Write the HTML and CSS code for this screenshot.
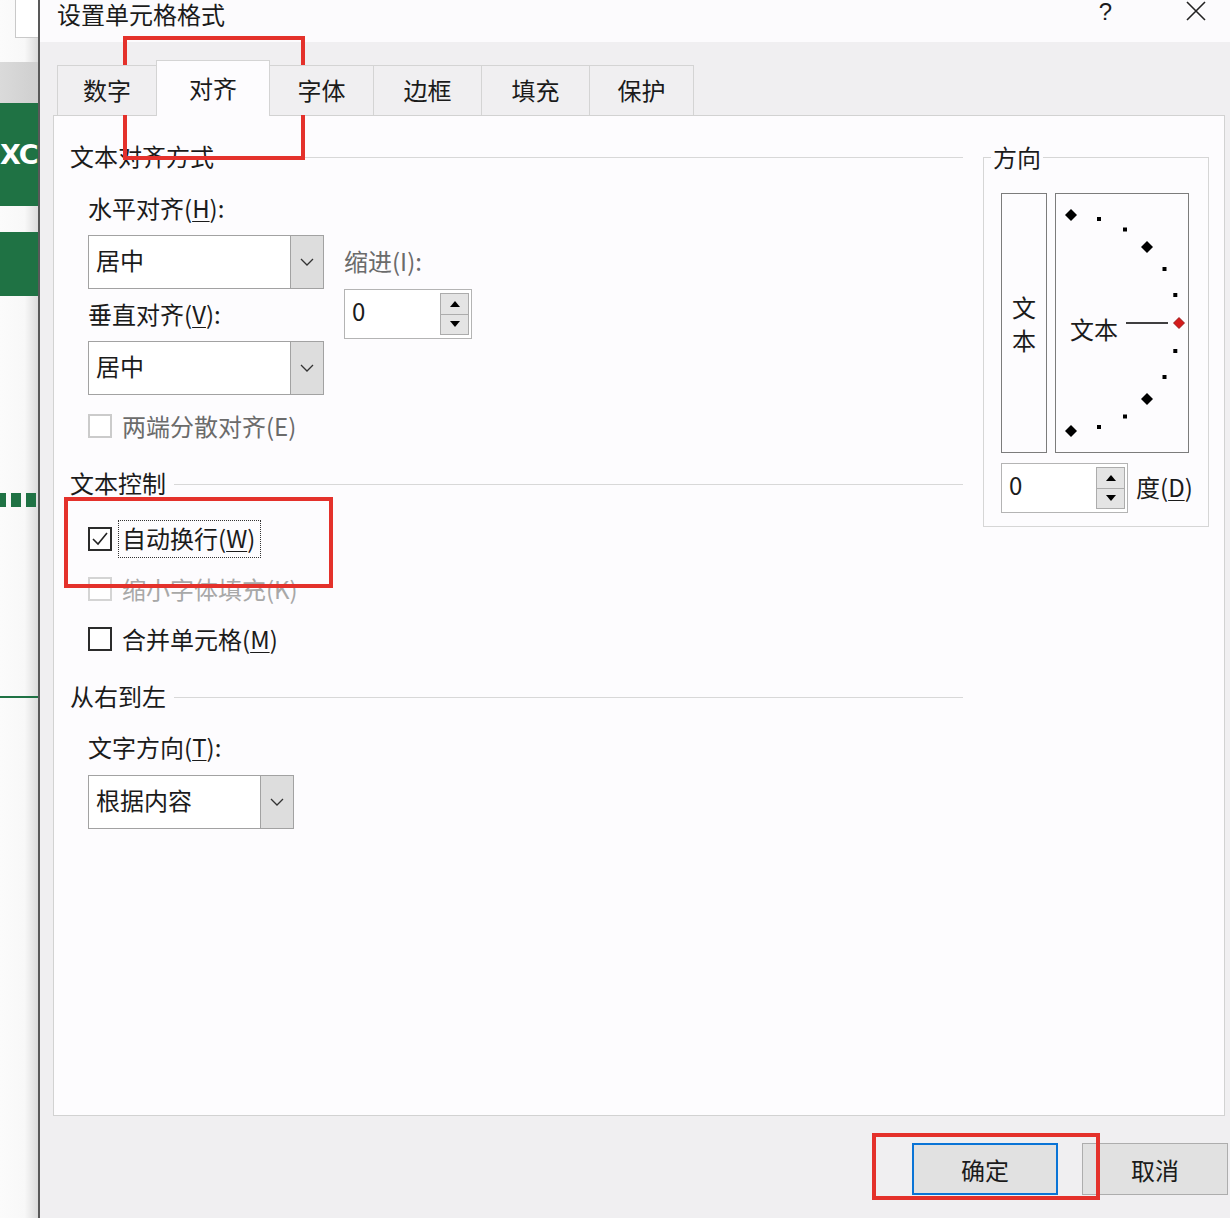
FILE: index.html
```html
<!DOCTYPE html>
<html lang="zh-CN">

<head>
  <meta charset="UTF-8">
  <title>设置单元格格式</title>
  <link rel="stylesheet" href="styles.css">
</head>

<body>

  <!-- excel sheet peeking out behind the dialog -->
  <div class="sheet-edge">
    <div class="edge-top"><div class="edge-box"></div></div>
    <div class="edge-gray"></div>
    <div class="edge-green">XC</div>
    <div class="edge-gap"></div>
    <div class="edge-green short"></div>
    <div class="edge-space" style="height: 197px"></div>
    <div class="edge-dash"></div>
    <div class="edge-space" style="height: 189px"></div>
    <div class="edge-line"></div>
  </div>

  <div class="dialog">
    <div class="titlebar">
      <span class="title">设置单元格格式</span>
      <span class="help">?</span>
      <svg class="close" width="20" height="20" viewBox="0 0 20 20">
        <path d="M1 1 L19 19 M19 1 L1 19" stroke="#222" stroke-width="1.6" fill="none" />
      </svg>
    </div>

    <div class="dialog-body">
      <div class="tabs">
        <div class="tab" style="width: 100px">数字</div>
        <div class="tab active" style="width: 114px">对齐</div>
        <div class="tab" style="width: 104px">字体</div>
        <div class="tab" style="width: 108px">边框</div>
        <div class="tab" style="width: 108px">填充</div>
        <div class="tab" style="width: 104px">保护</div>
      </div>

      <div class="panel">
        <div class="col-left">
          <div class="group-head">文本对齐方式</div>

          <div class="align-rows">
            <div class="align-main">
              <div class="field-label">水平对齐(<u>H</u>):</div>
              <div class="select">
                <span class="select-val">居中</span>
                <span class="select-btn">
                  <svg width="14" height="8" viewBox="0 0 14 8"><path d="M1 1 L7 7 L13 1" stroke="#333" stroke-width="1.3" fill="none" /></svg>
                </span>
              </div>
              <div class="field-label gap-v">垂直对齐(<u>V</u>):</div>
              <div class="select">
                <span class="select-val">居中</span>
                <span class="select-btn">
                  <svg width="14" height="8" viewBox="0 0 14 8"><path d="M1 1 L7 7 L13 1" stroke="#333" stroke-width="1.3" fill="none" /></svg>
                </span>
              </div>
            </div>

            <div class="align-indent">
              <div class="field-label dim">缩进(I):</div>
              <div class="spin">
                <span class="spin-val">0</span>
                <span class="spin-btns">
                  <span class="spin-btn"><svg width="10" height="6" viewBox="0 0 10 6"><path d="M0 6 L5 0 L10 6Z" /></svg></span>
                  <span class="spin-btn"><svg width="10" height="6" viewBox="0 0 10 6"><path d="M0 0 L10 0 L5 6Z" /></svg></span>
                </span>
              </div>
            </div>
          </div>

          <div class="check dim row-e"><span class="box"></span>两端分散对齐(E)</div>

          <div class="group-head head-ctrl">文本控制</div>

          <div class="check row-w">
            <span class="box on">
              <svg width="20" height="20" viewBox="0 0 20 20"><path d="M3 10 L8 15 L17 4" stroke="#222" stroke-width="1.6" fill="none" /></svg>
            </span>
            <span class="focus">自动换行(<u>W</u>)</span>
          </div>
          <div class="check faint row-k"><span class="box"></span>缩小字体填充(K)</div>
          <div class="check row-m"><span class="box"></span>合并单元格(<u>M</u>)</div>

          <div class="group-head head-rtl">从右到左</div>
          <div class="field-label gap-t">文字方向(<u>T</u>):</div>
          <div class="select narrow">
            <span class="select-val">根据内容</span>
            <span class="select-btn">
              <svg width="14" height="8" viewBox="0 0 14 8"><path d="M1 1 L7 7 L13 1" stroke="#333" stroke-width="1.3" fill="none" /></svg>
            </span>
          </div>
        </div>

        <fieldset class="orient">
          <legend>方向</legend>
          <div class="orient-row">
            <div class="vtext"><span>文</span><span>本</span></div>
            <div class="dial">
              <svg width="132" height="258" viewBox="0 0 132 258">
                <g fill="#000">
                  <polygon points="15,15 21,21 15,27 9,21" />
                  <polygon points="91,47 97,53 91,59 85,53" />
                  <polygon points="91,199 97,205 91,211 85,205" />
                  <polygon points="15,231 21,237 15,243 9,237" />
                  <rect x="41" y="23" width="4" height="4" />
                  <rect x="67" y="33.5" width="4" height="4" />
                  <rect x="106.5" y="73" width="4" height="4" />
                  <rect x="117.3" y="99" width="4" height="4" />
                  <rect x="117.3" y="155" width="4" height="4" />
                  <rect x="106.5" y="181" width="4" height="4" />
                  <rect x="67" y="220.5" width="4" height="4" />
                  <rect x="41" y="231" width="4" height="4" />
                </g>
                <line x1="70" y1="129" x2="112" y2="129" stroke="#000" stroke-width="1.6" />
                <polygon points="123,123.5 128.5,129 123,134.5 117.5,129" fill="#d41b1b" stroke="#8a0c0c" stroke-width="0.8" />
                <text x="14" y="145" class="dial-text">文本</text>
              </svg>
            </div>
          </div>
          <div class="orient-spin">
            <div class="spin small">
              <span class="spin-val">0</span>
              <span class="spin-btns">
                <span class="spin-btn"><svg width="10" height="6" viewBox="0 0 10 6"><path d="M0 6 L5 0 L10 6Z" /></svg></span>
                <span class="spin-btn"><svg width="10" height="6" viewBox="0 0 10 6"><path d="M0 0 L10 0 L5 6Z" /></svg></span>
              </span>
            </div>
            <span class="deg">度(<u>D</u>)</span>
          </div>
        </fieldset>
      </div>

      <div class="buttons">
        <button class="btn primary">确定</button>
        <button class="btn">取消</button>
      </div>
    </div>
  </div>

  <!-- red annotation boxes -->
  <div class="mark mark-tab"></div>
  <div class="mark mark-wrap"></div>
  <div class="mark mark-ok"></div>

</body>

</html>
```

FILE: styles.css
```css
* {
  box-sizing: border-box;
}

body {
  margin: 0;
  width: 1230px;
  height: 1218px;
  overflow: hidden;
  position: relative;
  display: flex;
  font-family: "Noto Sans CJK SC", "Noto Sans", sans-serif;
  font-size: 24px;
  color: #1b1b1b;
  background: #f6f6f6;
}

u {
  text-underline-offset: 3px;
  text-decoration-thickness: 1px;
}

/* sheet behind */
.sheet-edge {
  width: 38px;
  flex-shrink: 0;
  display: flex;
  flex-direction: column;
  background: linear-gradient(to right, #fbfbfb 0%, #f8f8f8 65%, #dcdcdc 100%);
}

.edge-top {
  height: 62px;
  padding-left: 15px;
}

.edge-box {
  height: 38px;
  background: #fff;
  border-left: 1px solid #c9c9c9;
  border-bottom: 1px solid #c9c9c9;
}

.edge-gray {
  height: 41px;
  background: linear-gradient(to right, #dadada, #cfcfcf);
}

.edge-green {
  height: 103px;
  background: #1f7244;
  color: #fff;
  font-family: "DejaVu Sans", sans-serif;
  font-weight: bold;
  font-size: 27px;
  display: flex;
  align-items: center;
  overflow: hidden;
  letter-spacing: -1px;
}

.edge-green.short {
  height: 64px;
}

.edge-gap {
  height: 26px;
}

.edge-dash {
  height: 14px;
  background: repeating-linear-gradient(to right, #1f7244 0 10px, transparent 10px 15px);
  margin-left: -4px;
}

.edge-line {
  height: 2px;
  background: #1f7244;
}

/* dialog */
.dialog {
  flex: 1;
  border-left: 2px solid #595959;
  background: #f0eff1;
  display: flex;
  flex-direction: column;
}

.titlebar {
  height: 42px;
  flex-shrink: 0;
  background: #fcfbfd;
  display: flex;
  align-items: flex-start;
  padding: 0 24px 0 17px;
}

.title {
  flex: 1;
  line-height: 26px;
  margin-top: 1px;
}

.help {
  font-family: "Liberation Sans", sans-serif;
  font-size: 24px;
  line-height: 24px;
  margin-right: 74px;
}

.close {
  margin-top: 1px;
}

.dialog-body {
  flex: 1;
  padding: 18px 5px 0 13px;
}

.tabs {
  display: flex;
  align-items: flex-end;
  height: 56px;
  margin-left: 4px;
  position: relative;
  z-index: 1;
}

.tab {
  height: 50px;
  margin-bottom: 1px;
  display: flex;
  align-items: center;
  justify-content: center;
  border-top: 1px solid #d4d4d4;
  border-right: 1px solid #d4d4d4;
  background: #f0eff1;
  padding-bottom: 2px;
}

.tab:first-child {
  border-left: 1px solid #d4d4d4;
}

.tab.active {
  height: 56px;
  margin-bottom: 0;
  margin-left: -1px;
  background: #fdfcfe;
  border-left: 1px solid #d4d4d4;
}

.panel {
  margin-top: -1px;
  height: 1001px;
  border: 1px solid #d2d2d2;
  background: #fdfcfe;
  display: grid;
  grid-template-columns: 893px 226px;
  column-gap: 20px;
  align-items: start;
  padding: 26px 0 0 16px;
}

/* left column */
.group-head {
  display: flex;
  align-items: center;
  height: 30px;
  line-height: 28px;
  padding-bottom: 2px;
}

.group-head::after {
  content: "";
  flex: 1;
  height: 1px;
  background: #d8d8d8;
  margin: 2px 0 0 8px;
}

.head-ctrl {
  margin-top: 28px;
}

.head-rtl {
  margin-top: 28px;
}

.field-label {
  height: 30px;
  line-height: 26px;
  white-space: nowrap;
}

.field-label.dim {
  color: #6b6b6b;
}

.gap-v {
  margin-top: 12px;
}

.gap-t {
  margin-top: 22px;
  margin-left: 18px;
}

.align-rows {
  display: flex;
  margin-top: 23px;
}

.align-main {
  margin-left: 18px;
  width: 236px;
}

.align-indent {
  margin-left: 20px;
  padding-top: 53px;
}

.select {
  display: flex;
  width: 236px;
  height: 54px;
  margin-top: 10px;
  border: 1px solid #a2a2a2;
  background: #fff;
}

.select.narrow {
  width: 206px;
  margin-top: 11px;
  margin-left: 18px;
}

.select-val {
  flex: 1;
  padding-left: 7px;
  line-height: 48px;
}

.select-btn {
  width: 33px;
  background: #dddddd;
  border-left: 1px solid #a2a2a2;
  display: flex;
  align-items: center;
  justify-content: center;
}

.spin {
  display: flex;
  align-items: center;
  width: 128px;
  height: 50px;
  margin-top: 11px;
  border: 1px solid #b4b4b4;
  background: #fff;
  padding: 0 2px 0 7px;
}

.spin.small {
  width: 127px;
  margin-top: 0;
}

.spin-val {
  flex: 1;
  line-height: 30px;
  padding-bottom: 6px;
}

.spin-btns {
  width: 29px;
  height: 42px;
  display: flex;
  flex-direction: column;
}

.spin-btn {
  flex: 1;
  display: flex;
  align-items: center;
  justify-content: center;
  background: #e4e4e4;
  border: 1px solid #acacac;
}

.spin-btn + .spin-btn {
  margin-top: -1px;
}

.check {
  display: flex;
  align-items: center;
  min-height: 30px;
  line-height: 28px;
  margin-left: 18px;
  white-space: nowrap;
}

.box {
  width: 24px;
  height: 24px;
  margin-right: 10px;
  border: 2px solid #2b2b2b;
  background: #fff;
  display: flex;
  align-items: center;
  justify-content: center;
}

.check.dim {
  color: #6b6b6b;
}

.check.dim .box {
  border: 2px solid #cbcbcb;
}

.check.faint {
  color: #a8a8a8;
}

.check.faint .box {
  border: 2px solid #d4d4d4;
}

.row-e {
  margin-top: 16px;
}

.row-w {
  margin-top: 21px;
}

.row-k {
  margin-top: 16px;
}

.row-m {
  margin-top: 20px;
}

.focus {
  line-height: 30px;
  height: 38px;
  padding: 2px 5px 4px 3px;
  margin-left: -4px;
  border: 1px dotted #333;
}

/* orientation box */
.orient {
  margin: 0;
  min-width: 0;
  padding: 21px 0 13px 17px;
  border: 1px solid #d6d6d6;
}

.orient legend {
  padding: 0 2px;
  margin-left: -10px;
  line-height: 30px;
}

.orient-row {
  display: flex;
  gap: 8px;
}

.vtext {
  width: 46px;
  height: 260px;
  border: 1px solid #7c7c7c;
  display: flex;
  flex-direction: column;
  align-items: center;
  justify-content: center;
  line-height: 33px;
}

.dial {
  width: 134px;
  height: 260px;
  border: 1px solid #7c7c7c;
}

.dial svg {
  display: block;
}

.dial-text {
  font-family: "Noto Sans CJK SC", sans-serif;
  font-size: 24px;
  fill: #1b1b1b;
}

.orient-spin {
  display: flex;
  align-items: center;
  margin-top: 10px;
}

.deg {
  margin-left: 8px;
  line-height: 28px;
  padding-bottom: 2px;
}

/* bottom buttons */
.buttons {
  display: flex;
  justify-content: flex-end;
  gap: 24px;
  margin-top: 27px;
  margin-right: -3px;
}

.btn {
  width: 146px;
  height: 52px;
  font-family: inherit;
  font-size: 24px;
  color: #1b1b1b;
  background: #e1e1e1;
  border: 1px solid #adadad;
  padding: 0;
}

.btn.primary {
  border: 2px solid #0a74d6;
}

/* annotation frames */
.mark {
  position: absolute;
  border: 4px solid #e4312b;
}

.mark-tab {
  left: 123px;
  top: 36px;
  width: 182px;
  height: 124px;
}

.mark-wrap {
  left: 64px;
  top: 497px;
  width: 269px;
  height: 91px;
}

.mark-ok {
  left: 872px;
  top: 1133px;
  width: 228px;
  height: 67px;
}
```
